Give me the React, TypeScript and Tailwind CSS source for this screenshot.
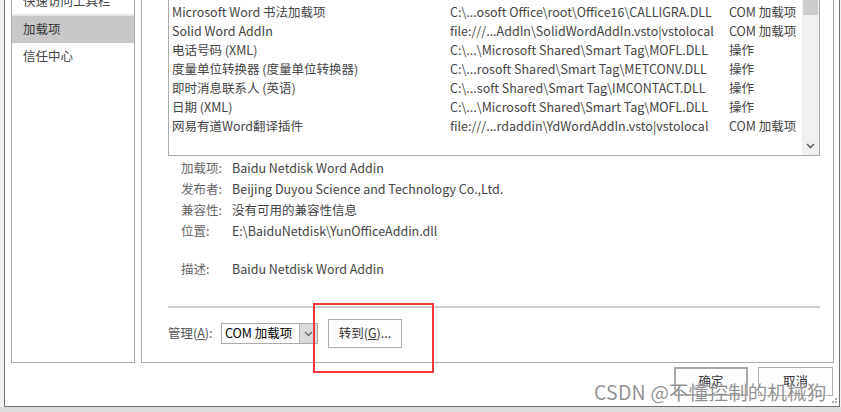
import React from "react";

const rows = [
  ["Microsoft Word 书法加载项", "C:\\...osoft Office\\root\\Office16\\CALLIGRA.DLL", "COM 加载项"],
  ["Solid Word AddIn", "file:///...AddIn\\SolidWordAddIn.vsto|vstolocal", "COM 加载项"],
  ["电话号码 (XML)", "C:\\...\\Microsoft Shared\\Smart Tag\\MOFL.DLL", "操作"],
  ["度量单位转换器 (度量单位转换器)", "C:\\...rosoft Shared\\Smart Tag\\METCONV.DLL", "操作"],
  ["即时消息联系人 (英语)", "C:\\...soft Shared\\Smart Tag\\IMCONTACT.DLL", "操作"],
  ["日期 (XML)", "C:\\...\\Microsoft Shared\\Smart Tag\\MOFL.DLL", "操作"],
  ["网易有道Word翻译插件", "file:///...rdaddin\\YdWordAddIn.vsto|vstolocal", "COM 加载项"],
];

const details = [
  ["加载项:", "Baidu Netdisk Word Addin"],
  ["发布者:", "Beijing Duyou Science and Technology Co.,Ltd."],
  ["兼容性:", "没有可用的兼容性信息"],
  ["位置:", "E:\\BaiduNetdisk\\YunOfficeAddin.dll"],
];

export default function App() {
  return (
    <div className="relative w-[841px] h-[412px] overflow-hidden bg-[#f0f0f0] font-['Noto_Sans_CJK_SC','Noto_Sans',sans-serif] text-[12.5px] text-[#444]">
      {/* window */}
      <div className="ml-[4px] w-[836px] h-[407px] bg-white border-l border-r border-b border-[#707070] flex flex-col">
        <div className="flex h-[363px] pl-[6px] gap-[6px]">
          {/* nav */}
          <div className="w-[124px] h-full border-l border-r border-b border-[#ababab] flex flex-col">
            <div className="-mt-[11px] h-[27px] flex items-center pl-[11px] border-b-2 border-[#e6e6e6] shrink-0">
              快速访问工具栏
            </div>
            <div className="h-[27px] flex items-center pl-[11px] bg-[#c8c8c8] text-[#333] shrink-0">加载项</div>
            <div className="h-[27px] flex items-center pl-[11px] shrink-0">信任中心</div>
          </div>

          {/* content panel */}
          <div className="w-[693px] h-full border-l border-r border-b border-[#ababab] pl-[26px] pr-[13px] flex flex-col">
            {/* list */}
            <div className="h-[156px] border-l border-r border-b border-[#ababab] flex">
              <div className="flex-1 pl-[3px] pt-[3px]">
                {rows.map((r) => (
                  <div key={r[0] + r[1]} className="h-[19px] flex items-center whitespace-nowrap">
                    <div className="w-[278px]">{r[0]}</div>
                    <div className="w-[279px]">{r[1]}</div>
                    <div>{r[2]}</div>
                  </div>
                ))}
              </div>
              <div className="w-[17px] bg-[#f0f0f0] flex flex-col justify-between">
                <div className="h-[15px] bg-[#cdcdcd] mx-[1px]" />
                <div className="h-[17px] flex items-center justify-center mb-[1px]">
                  <svg width="9" height="6" viewBox="0 0 9 6">
                    <path d="M1 1 L4.5 4.5 L8 1" fill="none" stroke="#606060" strokeWidth="1.6" />
                  </svg>
                </div>
              </div>
            </div>

            {/* details */}
            <div className="pt-[2px] pl-[13px]">
              {details.map((d) => (
                <div key={d[0]} className="h-[21px] flex items-center whitespace-nowrap">
                  <div className="w-[51px] text-[#666]">{d[0]}</div>
                  <div>{d[1]}</div>
                </div>
              ))}
              <div className="h-[21px] mt-[17px] flex items-center whitespace-nowrap">
                <div className="w-[51px] text-[#666]">描述:</div>
                <div>Baidu Netdisk Word Addin</div>
              </div>
            </div>

            <div className="mt-[26px] h-[2px] bg-[#d0d0d0]" />

            {/* manage row */}
            <div className="mt-[11px] flex items-center">
              <div className="w-[53px] text-[#555]">
                管理(<span className="underline">A</span>):
              </div>
              <div className="w-[97px] h-[21px] border border-[#ababab] flex items-stretch">
                <div className="flex-1 flex items-center pl-[3px] text-black">COM 加载项</div>
                <div className="w-[18px] bg-[#dadada] border-l border-[#b5b5b5] flex items-center justify-center">
                  <svg width="9" height="6" viewBox="0 0 9 6">
                    <path d="M1 1 L4.5 4.5 L8 1" fill="none" stroke="#606060" strokeWidth="1.2" />
                  </svg>
                </div>
              </div>
              <div className="ml-[10px] w-[74px] h-[29px] border border-[#adadad] bg-[#fdfdfd] flex items-center justify-center text-[#333]">
                转到(<span className="underline">G</span>)...
              </div>
            </div>
          </div>
        </div>

        {/* buttons */}
        <div className="flex justify-end gap-[10px] pr-[6px] pt-[4px]">
          <div className="w-[74px] h-[29px] border-2 border-[#a8a8a8] bg-[#fdfdfd] flex items-center justify-center text-[#333]">
            确定
          </div>
          <div className="w-[75px] h-[29px] border border-[#adadad] bg-[#fdfdfd] flex items-center justify-center text-[#333]">
            取消
          </div>
        </div>
      </div>
      <div className="h-[5px] bg-[#dcdcdc]" />

      {/* highlight box */}
      <div className="absolute left-[313px] top-[303px] w-[121px] h-[70px] border-2 border-[#ef3838]" />

      {/* watermark */}
      <div className="absolute left-[594px] top-[381px] text-[19.5px] leading-[22px] tracking-[0.2px] text-[rgba(110,110,110,0.75)] whitespace-nowrap [text-shadow:0_0_2px_white]">
        CSDN @不懂控制的机械狗
      </div>
      <div className="absolute left-[829px] top-[398px] grid grid-cols-3 gap-[1px]">
        <div className="w-[2px] h-[2px]" />
        <div className="w-[2px] h-[2px]" />
        <div className="w-[2px] h-[2px] bg-[#aaa]" />
        <div className="w-[2px] h-[2px]" />
        <div className="w-[2px] h-[2px] bg-[#aaa]" />
        <div className="w-[2px] h-[2px] bg-[#aaa]" />
      </div>
    </div>
  );
}
